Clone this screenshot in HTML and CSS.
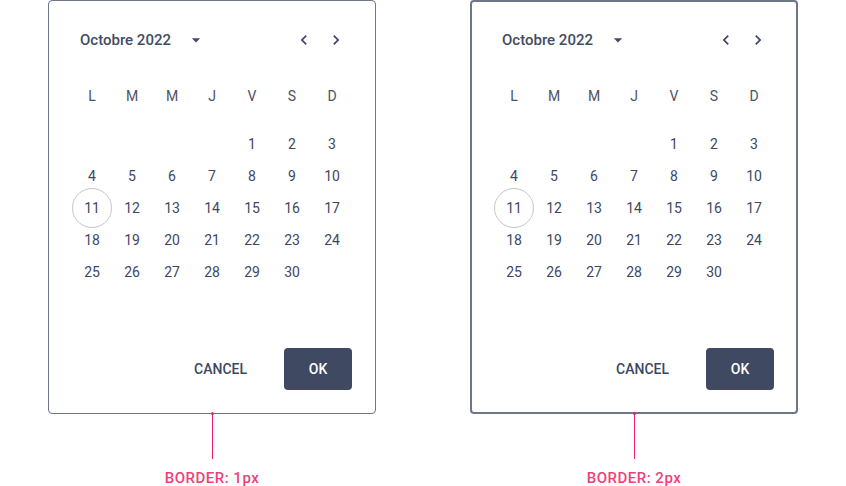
FILE: index.html
```html
<!DOCTYPE html>
<html lang="fr">
<head>
    <meta charset="UTF-8">
    <meta name="viewport" content="width=device-width, initial-scale=1.0">
    <title>Date picker - bordures</title>
    <link rel="stylesheet" href="styles.css">
</head>
<body>
    <div class="board">
        <!-- Variante bordure 1px -->
        <div class="figure">
            <div class="picker">
                <div class="picker-head">
                    <button class="month-btn">Octobre 2022
                        <svg viewBox="0 0 24 24" width="20" height="20"><path d="M7 10l5 5 5-5z"/></svg>
                    </button>
                    <div class="nav">
                        <button class="nav-btn"><svg viewBox="0 0 24 24" width="20" height="20"><path d="M15.41 7.41L14 6l-6 6 6 6 1.41-1.41L10.83 12z"/></svg></button>
                        <button class="nav-btn"><svg viewBox="0 0 24 24" width="20" height="20"><path d="M8.59 16.59L10 18l6-6-6-6-1.41 1.41L13.17 12z"/></svg></button>
                    </div>
                </div>
                <div class="weekdays">
                    <span>L</span><span>M</span><span>M</span><span>J</span><span>V</span><span>S</span><span>D</span>
                </div>
                <div class="days">
                    <span></span><span></span><span></span><span></span>
                    <span>1</span><span>2</span><span>3</span>
                    <span>4</span><span>5</span><span>6</span><span>7</span><span>8</span><span>9</span><span>10</span>
                    <span class="today">11</span><span>12</span><span>13</span><span>14</span><span>15</span><span>16</span><span>17</span>
                    <span>18</span><span>19</span><span>20</span><span>21</span><span>22</span><span>23</span><span>24</span>
                    <span>25</span><span>26</span><span>27</span><span>28</span><span>29</span><span>30</span>
                </div>
                <div class="actions">
                    <button class="btn-text">CANCEL</button>
                    <button class="btn-ok">OK</button>
                </div>
            </div>
            <div class="marker"></div>
            <p class="note">BORDER: 1px</p>
        </div>

        <!-- Variante bordure 2px -->
        <div class="figure">
            <div class="picker thick">
                <div class="picker-head">
                    <button class="month-btn">Octobre 2022
                        <svg viewBox="0 0 24 24" width="20" height="20"><path d="M7 10l5 5 5-5z"/></svg>
                    </button>
                    <div class="nav">
                        <button class="nav-btn"><svg viewBox="0 0 24 24" width="20" height="20"><path d="M15.41 7.41L14 6l-6 6 6 6 1.41-1.41L10.83 12z"/></svg></button>
                        <button class="nav-btn"><svg viewBox="0 0 24 24" width="20" height="20"><path d="M8.59 16.59L10 18l6-6-6-6-1.41 1.41L13.17 12z"/></svg></button>
                    </div>
                </div>
                <div class="weekdays">
                    <span>L</span><span>M</span><span>M</span><span>J</span><span>V</span><span>S</span><span>D</span>
                </div>
                <div class="days">
                    <span></span><span></span><span></span><span></span>
                    <span>1</span><span>2</span><span>3</span>
                    <span>4</span><span>5</span><span>6</span><span>7</span><span>8</span><span>9</span><span>10</span>
                    <span class="today">11</span><span>12</span><span>13</span><span>14</span><span>15</span><span>16</span><span>17</span>
                    <span>18</span><span>19</span><span>20</span><span>21</span><span>22</span><span>23</span><span>24</span>
                    <span>25</span><span>26</span><span>27</span><span>28</span><span>29</span><span>30</span>
                </div>
                <div class="actions">
                    <button class="btn-text">CANCEL</button>
                    <button class="btn-ok">OK</button>
                </div>
            </div>
            <div class="marker"></div>
            <p class="note">BORDER: 2px</p>
        </div>
    </div>
</body>
</html>
```

FILE: styles.css
```css
/* Page */
body {
    margin: 0;
    background: #ffffff;
    font-family: Roboto, "Noto Sans", sans-serif;
    color: #3e475f;
}

.board {
    display: flex;
    gap: 94px;
    padding-left: 48px;
}

.figure {
    display: flex;
    flex-direction: column;
    align-items: center;
}

/* Date picker card */
.picker {
    width: 328px;
    height: 414px;
    box-sizing: border-box;
    border: 1px solid #6e7789;
    border-radius: 4px;
    padding: 15px 23px 23px;
    display: flex;
    flex-direction: column;
}

/* 2px border, same inner position */
.picker.thick {
    border-width: 2px;
    padding: 14px 22px 22px;
}

button {
    font-family: inherit;
    background: none;
    border: none;
    color: inherit;
    cursor: pointer;
    padding: 0;
}

svg {
    fill: currentColor;
    display: block;
}

.picker-head {
    height: 48px;
    display: flex;
    align-items: center;
    justify-content: space-between;
}

.month-btn {
    display: flex;
    align-items: center;
    gap: 15px;
    padding-left: 8px;
    font-size: 15px;
    font-weight: 500;
    color: #434c63;
}

.nav {
    display: flex;
}

.nav-btn {
    width: 32px;
    height: 32px;
    display: flex;
    align-items: center;
    justify-content: center;
}

/* Week day labels */
.weekdays,
.days {
    display: grid;
    grid-template-columns: repeat(7, 40px);
}

.weekdays {
    margin-top: 16px;
}

.weekdays span {
    height: 32px;
    display: flex;
    align-items: center;
    justify-content: center;
    font-size: 14px;
    color: #4a5369;
}

.days {
    margin-top: 16px;
    grid-auto-rows: 32px;
}

.days span {
    display: flex;
    align-items: center;
    justify-content: center;
    font-size: 14px;
}

.days .today {
    position: relative;
}

.days .today::before {
    content: "";
    position: absolute;
    left: 0;
    top: -4px;
    width: 38px;
    height: 38px;
    border: 1px solid #c3c6ce;
    border-radius: 50%;
}

/* Footer buttons */
.actions {
    margin-top: auto;
    display: flex;
    justify-content: flex-end;
    align-items: center;
    gap: 21px;
}

.btn-text {
    font-size: 14px;
    font-weight: 500;
    padding: 0 16px;
    height: 42px;
}

.btn-ok {
    width: 68px;
    height: 42px;
    background: #3f4962;
    color: #ffffff;
    border-radius: 4px;
    font-size: 14px;
    font-weight: 500;
}

/* Annotation */
.marker {
    width: 1px;
    height: 45px;
    background: #ee1f72;
    position: relative;
}

.marker::before {
    content: "";
    position: absolute;
    left: -1px;
    top: -2px;
    width: 3px;
    height: 3px;
    border-radius: 50%;
    background: #ee1f72;
}

.note {
    margin: 10px 0 0;
    font-size: 15px;
    font-weight: 500;
    color: #ef4079;
    letter-spacing: 0.5px;
}
```
